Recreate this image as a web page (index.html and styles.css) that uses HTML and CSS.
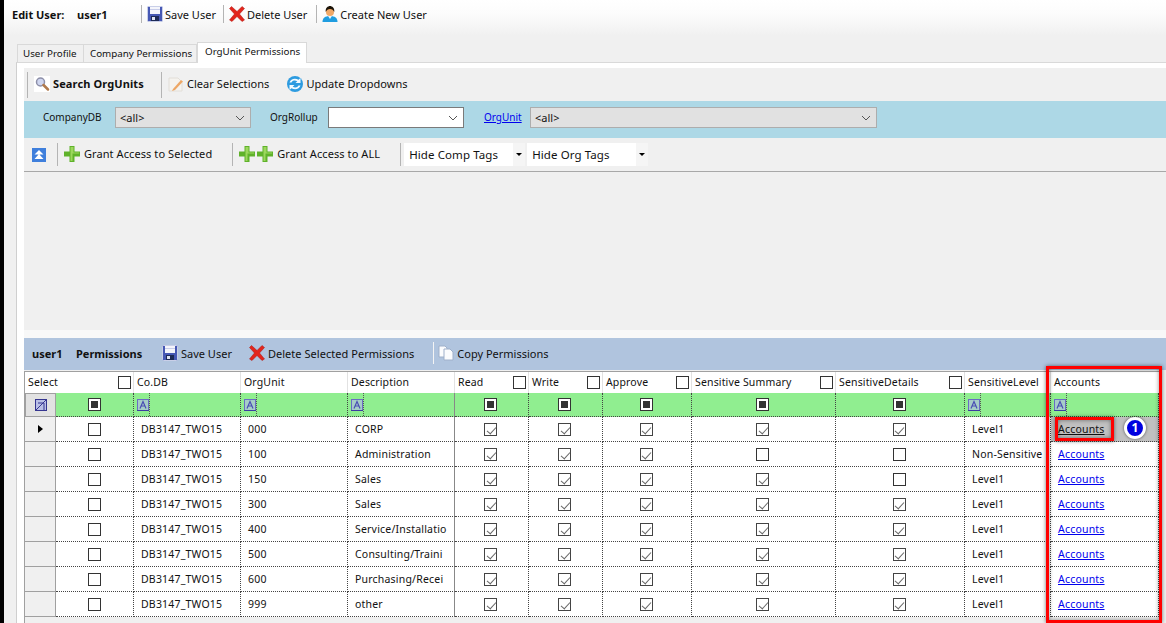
FILE: index.html
```html
<!DOCTYPE html>
<html lang="en">
<head>
<meta charset="utf-8">
<title>Edit User</title>
<link rel="stylesheet" href="styles.css">
</head>
<body>
<svg class="defs" width="0" height="0" aria-hidden="true">
  <defs>
    <symbol id="i-save" viewBox="0 0 16 16">
      <rect x="0.5" y="0.5" width="15" height="15" rx="1" fill="#4658b4" stroke="#c9cfe8"/>
      <rect x="3" y="1" width="10" height="7" fill="#f4f5fb"/>
      <rect x="3" y="3" width="10" height="1" fill="#c8cdea"/>
      <rect x="4" y="10" width="8" height="5" fill="#1d2a55"/>
      <rect x="5" y="11" width="3" height="3" fill="#dfe3f2"/>
    </symbol>
    <symbol id="i-x" viewBox="0 0 16 16">
      <path d="M0.500 2.500 2.500 0.500 8 5.500 13 0.500 15.500 2.500 10.500 8 15.500 14 13 15.500 8 10.500 3 15.500 0.500 14 5.500 8Z" fill="#e3251c" stroke="#a8150f" stroke-width=".5"/>
    </symbol>
    <symbol id="i-user" viewBox="0 0 16 16">
      <path d="M0.500 16c0-4 2.500-6 7.500-6s7.500 2 7.500 6Z" fill="#1f9de0"/>
      <path d="M6 10h4l-2 3Z" fill="#e8f6ff"/>
      <circle cx="8" cy="6" r="4" fill="#f0a868"/>
      <path d="M3.800 6C3 2 6 0 8 0s5 2 4.200 6C11.500 4 10 3 8 3S4.500 4 3.800 6Z" fill="#1c1408"/>
    </symbol>
    <symbol id="i-search" viewBox="0 0 16 16">
      <rect width="16" height="16" fill="#fff"/>
      <circle cx="6.500" cy="6" r="4" fill="#cfd6f0" stroke="#8d8fa8" stroke-width="1.500"/>
      <path d="M9.500 9 14 13.500" stroke="#b07a4e" stroke-width="2.500" stroke-linecap="round"/>
    </symbol>
    <symbol id="i-clear" viewBox="0 0 16 16">
      <path d="M1 2h9l4 4v9H1Z" fill="#f5f3ef" stroke="#e2ded8"/>
      <path d="M5 13 13 4l2 1.500-8 8.500-3 1Z" fill="#eda766"/>
    </symbol>
    <symbol id="i-update" viewBox="0 0 16 16">
      <circle cx="8" cy="8" r="8" fill="#2d9be0"/>
      <path d="M2.500 6.500C3.500 3 8 1.500 11.500 3.800L13.500 2v5H8.500L10.300 5.300C8 4 5.500 4.500 4.500 6.500Z" fill="#f2faff"/>
      <path d="M13.500 9.500C12.500 13 8 14.500 4.500 12.200L2.500 14V9H7.500L5.700 10.700C8 12 10.500 11.500 11.500 9.500Z" fill="#f2faff"/>
    </symbol>
    <symbol id="i-plus" viewBox="0 0 16 16">
      <path d="M5.500 0h5v5.500H16v5h-5.500V16h-5v-5.500H0v-5h5.500Z" fill="#5fb22a"/>
      <path d="M6.500 1h3v5.500H15v1H8.500V15h-2Z" fill="#9cd75d"/>
    </symbol>
    <symbol id="i-up" viewBox="0 0 14 14">
      <rect width="14" height="14" fill="#3f7fdc"/>
      <path d="M7 2 11.500 6.500H2.500ZM7 6 11.500 11H2.500Z" fill="#fff"/>
    </symbol>
    <symbol id="i-copy" viewBox="0 0 16 16">
      <path d="M1 1h6l2 2v9H1Z" fill="#fbfcfe" stroke="#9fb0ca"/>
      <path d="M6 4h6l3 3v8H6Z" fill="#fbfcfe" stroke="#9fb0ca"/>
    </symbol>
    <symbol id="i-a" viewBox="0 0 12 12">
      <rect x=".5" y=".5" width="11" height="11" fill="#a6cdc8" stroke="#6a6cc4"/>
      <path d="M3 9.500 6 2.500l3 7M4 7h4" fill="none" stroke="#4a4eb4" stroke-width="1.200"/>
      <path d="M0 11.500h12" stroke="#3c3ca0"/>
    </symbol>
    <symbol id="i-clearf" viewBox="0 0 12 12">
      <rect x=".5" y=".5" width="11" height="11" fill="#b9bfe6" stroke="#35358f"/>
      <path d="M1 11 11 1M3 4h6v7" fill="none" stroke="#35358f"/>
    </symbol>
  </defs>
</svg>

<div class="app">
  <header class="userbar">
    <span class="userbar-title">Edit User:</span>
    <span class="userbar-name">user1</span>
    <span class="sep"></span>
    <a class="tool"><svg class="ico16"><use href="#i-save"/></svg>Save User</a>
    <span class="sep"></span>
    <a class="tool tool-del"><svg class="ico16"><use href="#i-x"/></svg>Delete User</a>
    <span class="sep"></span>
    <a class="tool"><svg class="ico16"><use href="#i-user"/></svg>Create New User</a>
  </header>

  <nav class="tabs">
    <span class="tab tab-profile">User Profile</span>
    <span class="tab tab-company">Company Permissions</span>
    <span class="tab tab-active">OrgUnit Permissions</span>
  </nav>

  <main class="panel">
    <div class="inner">
      <div class="toolbar search-bar">
        <span class="sep sep-tall"></span>
        <a class="tool tool-strong"><svg class="ico16"><use href="#i-search"/></svg>Search OrgUnits</a>
        <span class="sep sep-tall"></span>
        <a class="tool tool-clear"><svg class="ico16"><use href="#i-clear"/></svg>Clear Selections</a>
        <a class="tool tool-update"><svg class="ico16"><use href="#i-update"/></svg>Update Dropdowns</a>
      </div>

      <div class="filters">
        <span class="flabel flabel-co">CompanyDB</span>
        <span class="select select-co">&lt;all&gt;<svg class="chev" viewBox="0 0 10 6"><path d="M1 1l4 4 4-4" fill="none" stroke="#555"/></svg></span>
        <span class="flabel flabel-roll">OrgRollup</span>
        <span class="select select-roll"><svg class="chev" viewBox="0 0 10 6"><path d="M1 1l4 4 4-4" fill="none" stroke="#555"/></svg></span>
        <a class="flink">OrgUnit</a>
        <span class="select select-org">&lt;all&gt;<svg class="chev" viewBox="0 0 10 6"><path d="M1 1l4 4 4-4" fill="none" stroke="#555"/></svg></span>
      </div>

      <div class="toolbar grant-bar">
        <svg class="ico-up"><use href="#i-up"/></svg>
        <span class="sep sep-grant sep-first"></span>
        <a class="tool tool-grant"><svg class="ico16"><use href="#i-plus"/></svg>Grant Access to Selected</a>
        <span class="sep sep-grant sep-second"></span>
        <a class="tool tool-grant"><svg class="ico16 plus1"><use href="#i-plus"/></svg><svg class="ico16"><use href="#i-plus"/></svg>Grant Access to ALL</a>
        <span class="sep sep-grant sep-third"></span>
        <span class="drop drop-comp">Hide Comp Tags<i class="drop-btn"></i></span>
        <span class="drop drop-org">Hide Org Tags<i class="drop-btn"></i></span>
      </div>

      <div class="empty"></div>

      <div class="toolbar perm-bar">
        <strong class="perm-user">user1</strong>
        <strong class="perm-title">Permissions</strong>
        <a class="tool tool-psave"><svg class="ico16"><use href="#i-save"/></svg>Save User</a>
        <a class="tool tool-pdel"><svg class="ico16"><use href="#i-x"/></svg>Delete Selected Permissions</a>
        <span class="sep sep-light"></span>
        <a class="tool"><svg class="ico16"><use href="#i-copy"/></svg>Copy Permissions</a>
      </div>

      <div class="grid">
        <div class="row row-head">
          <div class="hc hc-select">Select<i class="cb"></i></div>
          <div class="hc">Co.DB</div>
          <div class="hc">OrgUnit</div>
          <div class="hc">Description</div>
          <div class="hc">Read<i class="cb"></i></div>
          <div class="hc">Write<i class="cb"></i></div>
          <div class="hc">Approve<i class="cb"></i></div>
          <div class="hc">Sensitive Summary<i class="cb"></i></div>
          <div class="hc">SensitiveDetails<i class="cb"></i></div>
          <div class="hc">SensitiveLevel</div>
          <div class="hc hc-last">Accounts</div>
        </div>

        <div class="row row-filter">
          <div class="rh rh-filter"><svg class="ico-a"><use href="#i-clearf"/></svg></div>
          <div class="fc fc-c"><i class="cb cb-mixed"></i></div>
          <div class="fc"><svg class="ico-a"><use href="#i-a"/></svg></div>
          <div class="fc"><svg class="ico-a"><use href="#i-a"/></svg></div>
          <div class="fc"><svg class="ico-a"><use href="#i-a"/></svg></div>
          <div class="fc fc-c"><i class="cb cb-mixed"></i></div>
          <div class="fc fc-c"><i class="cb cb-mixed"></i></div>
          <div class="fc fc-c"><i class="cb cb-mixed"></i></div>
          <div class="fc fc-c"><i class="cb cb-mixed"></i></div>
          <div class="fc fc-c"><i class="cb cb-mixed"></i></div>
          <div class="fc"><svg class="ico-a"><use href="#i-a"/></svg></div>
          <div class="fc"><svg class="ico-a"><use href="#i-a"/></svg></div>
        </div>

        <div class="row">
          <div class="rh"><i class="current"></i></div>
          <div class="c c-c"><i class="cb"></i></div>
          <div class="c">DB3147_TWO15</div><div class="c">000</div><div class="c">CORP</div>
          <div class="c c-c"><i class="cb cb-on"></i></div><div class="c c-c"><i class="cb cb-on"></i></div><div class="c c-c"><i class="cb cb-on"></i></div><div class="c c-c"><i class="cb cb-on"></i></div><div class="c c-c"><i class="cb cb-on"></i></div>
          <div class="c">Level1</div>
          <div class="c c-selected"><a class="acct acct-focus">Accounts</a></div>
        </div>
        <div class="row">
          <div class="rh"></div>
          <div class="c c-c"><i class="cb"></i></div>
          <div class="c">DB3147_TWO15</div><div class="c">100</div><div class="c">Administration</div>
          <div class="c c-c"><i class="cb cb-on"></i></div><div class="c c-c"><i class="cb cb-on"></i></div><div class="c c-c"><i class="cb cb-on"></i></div><div class="c c-c"><i class="cb"></i></div><div class="c c-c"><i class="cb"></i></div>
          <div class="c">Non-Sensitive</div>
          <div class="c"><a class="acct">Accounts</a></div>
        </div>
        <div class="row">
          <div class="rh"></div>
          <div class="c c-c"><i class="cb"></i></div>
          <div class="c">DB3147_TWO15</div><div class="c">150</div><div class="c">Sales</div>
          <div class="c c-c"><i class="cb cb-on"></i></div><div class="c c-c"><i class="cb cb-on"></i></div><div class="c c-c"><i class="cb cb-on"></i></div><div class="c c-c"><i class="cb cb-on"></i></div><div class="c c-c"><i class="cb"></i></div>
          <div class="c">Level1</div>
          <div class="c"><a class="acct">Accounts</a></div>
        </div>
        <div class="row">
          <div class="rh"></div>
          <div class="c c-c"><i class="cb"></i></div>
          <div class="c">DB3147_TWO15</div><div class="c">300</div><div class="c">Sales</div>
          <div class="c c-c"><i class="cb cb-on"></i></div><div class="c c-c"><i class="cb cb-on"></i></div><div class="c c-c"><i class="cb cb-on"></i></div><div class="c c-c"><i class="cb cb-on"></i></div><div class="c c-c"><i class="cb cb-on"></i></div>
          <div class="c">Level1</div>
          <div class="c"><a class="acct">Accounts</a></div>
        </div>
        <div class="row">
          <div class="rh"></div>
          <div class="c c-c"><i class="cb"></i></div>
          <div class="c">DB3147_TWO15</div><div class="c">400</div><div class="c">Service/Installatio</div>
          <div class="c c-c"><i class="cb cb-on"></i></div><div class="c c-c"><i class="cb cb-on"></i></div><div class="c c-c"><i class="cb cb-on"></i></div><div class="c c-c"><i class="cb cb-on"></i></div><div class="c c-c"><i class="cb cb-on"></i></div>
          <div class="c">Level1</div>
          <div class="c"><a class="acct">Accounts</a></div>
        </div>
        <div class="row">
          <div class="rh"></div>
          <div class="c c-c"><i class="cb"></i></div>
          <div class="c">DB3147_TWO15</div><div class="c">500</div><div class="c">Consulting/Traini</div>
          <div class="c c-c"><i class="cb cb-on"></i></div><div class="c c-c"><i class="cb cb-on"></i></div><div class="c c-c"><i class="cb cb-on"></i></div><div class="c c-c"><i class="cb cb-on"></i></div><div class="c c-c"><i class="cb cb-on"></i></div>
          <div class="c">Level1</div>
          <div class="c"><a class="acct">Accounts</a></div>
        </div>
        <div class="row">
          <div class="rh"></div>
          <div class="c c-c"><i class="cb"></i></div>
          <div class="c">DB3147_TWO15</div><div class="c">600</div><div class="c">Purchasing/Recei</div>
          <div class="c c-c"><i class="cb cb-on"></i></div><div class="c c-c"><i class="cb cb-on"></i></div><div class="c c-c"><i class="cb cb-on"></i></div><div class="c c-c"><i class="cb cb-on"></i></div><div class="c c-c"><i class="cb cb-on"></i></div>
          <div class="c">Level1</div>
          <div class="c"><a class="acct">Accounts</a></div>
        </div>
        <div class="row">
          <div class="rh"></div>
          <div class="c c-c"><i class="cb"></i></div>
          <div class="c">DB3147_TWO15</div><div class="c">999</div><div class="c">other</div>
          <div class="c c-c"><i class="cb cb-on"></i></div><div class="c c-c"><i class="cb cb-on"></i></div><div class="c c-c"><i class="cb cb-on"></i></div><div class="c c-c"><i class="cb cb-on"></i></div><div class="c c-c"><i class="cb cb-on"></i></div>
          <div class="c">Level1</div>
          <div class="c"><a class="acct">Accounts</a></div>
        </div>
      </div>
    </div>
  </main>
</div>

<div class="callout callout-col"></div>
<div class="callout callout-cell"></div>
<div class="badge">1</div>
</body>
</html>
```
FILE: styles.css
```css
* { box-sizing: border-box; }
html, body { margin: 0; height: 623px; overflow: hidden; }
body {
  position: relative;
  width: 1166px;
  font-family: "Noto Sans", "Open Sans", sans-serif;
  font-size: 11px;
  color: #111;
  background: #f0f0f0;
}
.defs { position: absolute; }
.app {
  height: 623px;
  border-left: 4px solid #000;
  background: linear-gradient(#fff 0, #fcfcfc 14px, #f0f0f0 36px);
}
a { cursor: pointer; }

.ico16 { width: 16px; height: 16px; flex: none; margin-right: 2px; }
.tool { display: inline-flex; align-items: center; white-space: nowrap; }
.tool-strong { font-weight: 700; letter-spacing: .12px; }
.sep { width: 1px; height: 18px; background: #b4b4b4; flex: none; }

/* user bar */
.userbar { display: flex; align-items: center; height: 28px; padding-left: 8px; }
.userbar-title { font-weight: 700; width: 65px; }
.userbar-name { font-weight: 700; width: 64px; }
.userbar .sep { margin-right: 5px; }
.userbar .tool { margin-right: 7px; }
.userbar .tool-del { margin-right: 9px; }

/* tabs */
.tabs { display: flex; align-items: flex-end; height: 34px; margin-left: 12px; padding-left: 1px; }
.tab {
  height: 18px;
  padding: 1px 0 0 5px;
  background: #f0f0f0;
  border: 1px solid #d9d9d9;
  border-bottom: 0;
  border-left: 0;
  font-size: 9.800px;
  line-height: 15px;
}
.tab-profile { width: 67px; border-left: 1px solid #d9d9d9; }
.tab-company { width: 113px; padding-left: 6px; }
.tab-active {
  width: 110px;
  height: 21px;
  margin-bottom: -1px;
  position: relative;
  background: #fff;
  padding: 1px 0 0 7px;
  border-left: 1px solid #d9d9d9;
}

/* panel */
.panel {
  height: 561px;
  margin-left: 12px;
  padding: 5px 0 0 7px;
  background: #fff;
  border-left: 1px solid #cfcfcf;
  border-top: 1px solid #d9d9d9;
}
.inner { height: 100%; background: #f0f0f0; display: flex; flex-direction: column; }
.toolbar { display: flex; align-items: center; flex: none; }

.search-bar { height: 33px; padding-left: 3px; }
.search-bar .tool { padding-bottom: 2px; }
.sep-tall { height: 26px; }
.tool-strong { margin: 0 17px 0 6px; }
.search-bar .ico16 { margin-right: 3px; }
.tool-clear { margin-left: 6px; letter-spacing: .05px; }
.tool-update { margin-left: 18px; letter-spacing: .05px; }

.filters {
  height: 37px;
  padding-top: 6px;
  background: #add8e6;
  display: flex;
  align-items: flex-start;
  flex: none;
  line-height: 20px;
}
.flabel { flex: none; font-size: 10px; }
.flabel-co { margin-left: 19px; width: 72px; }
.flabel-roll { margin-left: 19px; width: 58px; }
.select {
  position: relative;
  display: block;
  flex: none;
  height: 21px;
  line-height: 19px;
  padding-left: 4px;
  border: 1px solid #7a7a7a;
  background: #fff;
}
.select-co, .select-org { background: #e1e1e1; border-color: #adadad; }
.select-co { width: 136px; }
.select-roll { width: 136px; }
.select-org { width: 347px; }
.chev { position: absolute; right: 5px; top: 7px; width: 10px; height: 6px; }
.flink { margin: 0 9px 0 20px; width: 37px; color: #00e; text-decoration: underline; flex: none; font-size: 10px; }

.grant-bar { height: 34px; border-bottom: 1px solid #a8a8a8; padding-left: 8px; }
.ico-up { width: 14px; height: 14px; flex: none; }
.sep-grant { height: 23px; }
.sep-first { margin: 0 6px 0 11px; }
.sep-second { margin: 0 6px 0 20px; }
.sep-third { margin: 0 3px 0 20px; }
.tool-grant { padding-bottom: 2px; letter-spacing: .08px; }
.tool-grant .ico16 { margin-right: 4px; }
.tool-grant .plus1 { margin-right: 2px; }
.drop {
  position: relative;
  display: block;
  flex: none;
  height: 23px;
  line-height: 23px;
  padding-left: 5px;
  background: #fff;
  font-size: 11.500px;
  letter-spacing: .1px;
}
.drop-comp { width: 121px; margin-right: 2px; }
.drop-org { width: 121px; }
.drop-btn { position: absolute; right: 0; top: 0; width: 12px; height: 23px; background: #f5f5f5; }
.drop-btn::after {
  content: "";
  position: absolute;
  left: 3px;
  top: 10px;
  border: 3px solid transparent;
  border-top: 3px solid #000;
  border-bottom: 0;
}

.empty { height: 166px; flex: none; border-bottom: 8px solid #f8f8f8; }

.perm-bar {
  height: 32px;
  background: #b0c4de;
  padding: 0 0 2px 8px;
}
.perm-user { width: 44px; flex: none; }
.perm-title { width: 86px; flex: none; }
.tool-psave { margin-right: 17px; }
.tool-pdel { margin-right: 19px; letter-spacing: .04px; }
.perm-bar .ico16 { margin-right: 3px; }
.sep-light { height: 22px; margin-right: 4px; background: #f4f4f4; }

/* grid */
.grid { width: 1135px; flex: 1; margin-top: 1px; border-left: 1px solid #a0a0a0; }
.row {
  display: grid;
  grid-template-columns: 31px 78px 107px 107px 107px 74px 74px 89px 144px 129px 86px 108px;
  height: 25px;
  font-size: 10.500px;
  letter-spacing: .2px;
}
.row-head {
  grid-template-columns: 109px 107px 107px 107px 74px 74px 89px 144px 129px 86px 108px;
  height: 22px;
  background: #fff;
  border-top: 1px solid #a0a0a0;
  letter-spacing: .15px;
}
.hc {
  display: flex;
  align-items: center;
  justify-content: space-between;
  padding: 0 2px 2px 3px;
  border-right: 1px solid #e2e2e2;
}
.hc .cb { margin-top: 2px; }
.hc-last { border-right: 0; }
.row-filter { background: #90ee90; height: 24px; }
.rh {
  display: flex;
  align-items: center;
  justify-content: center;
  background: #f0f0f0;
  border-bottom: 1px solid #a0a0a0;
  border-right: 1px solid #a0a0a0;
}
.rh-filter { background: #e2e2e2; border: 1px solid #a0a0a0; }
.fc {
  display: flex;
  align-items: center;
  padding-left: 3px;
  border-right: 1px dotted #444;
  border-bottom: 1px dotted #444;
}
.fc:not(.fc-c)::after { content: ""; align-self: stretch; border-left: 1px dotted #555; }
.fc-c, .c-c { justify-content: center; padding-left: 0 !important; }
.c:nth-child(n+6):nth-child(-n+10), .fc:nth-child(n+6):nth-child(-n+10) { padding-right: 2px; }
.c {
  display: flex;
  align-items: center;
  padding-left: 7px;
  background: #fff;
  border-right: 1px dotted #444;
  border-bottom: 1px dotted #444;
  white-space: nowrap;
  overflow: hidden;
}
.c:nth-child(5), .fc:nth-child(5) { border-right: 1px solid #888; }
.c-selected { background: #c0c0c0; }
.cb {
  display: block;
  position: relative;
  width: 13px;
  height: 13px;
  flex: none;
  background: #fff;
  border: 1px solid #333;
}
.cb-mixed::after { content: ""; position: absolute; inset: 2px; background: #333; }
.cb-on { border-color: #444; }
.cb-on::after {
  content: "";
  position: absolute;
  left: 3.500px;
  top: 1px;
  width: 4px;
  height: 8px;
  border: solid #666;
  border-width: 0 1.500px 1.500px 0;
  transform: rotate(42deg);
}
.current { width: 0; height: 0; border: 4.500px solid transparent; border-left: 5px solid #000; border-right: 0; }
.ico-a { width: 12px; height: 12px; flex: none; }
.acct { color: #00e; text-decoration: underline; }
.acct-focus { color: #111; }

/* annotations drawn over the screenshot */
.callout {
  position: absolute;
  border: 3px solid #f00;
  box-shadow: 0 0 4px rgba(0, 0, 0, .55), inset 0 0 4px rgba(0, 0, 0, .45);
}
.callout-col { left: 1046px; top: 366px; width: 116px; height: 257px; }
.callout-cell { left: 1055px; top: 417px; width: 59px; height: 24px; }
.badge {
  position: absolute;
  left: 1124px;
  top: 417px;
  width: 22px;
  height: 22px;
  border-radius: 50%;
  background: #0000e0;
  border: 3px solid #fff;
  box-shadow: 0 0 3px rgba(0, 0, 0, .6);
  color: #fff;
  font-weight: 700;
  font-size: 12px;
  line-height: 15px;
  text-align: center;
}
```
